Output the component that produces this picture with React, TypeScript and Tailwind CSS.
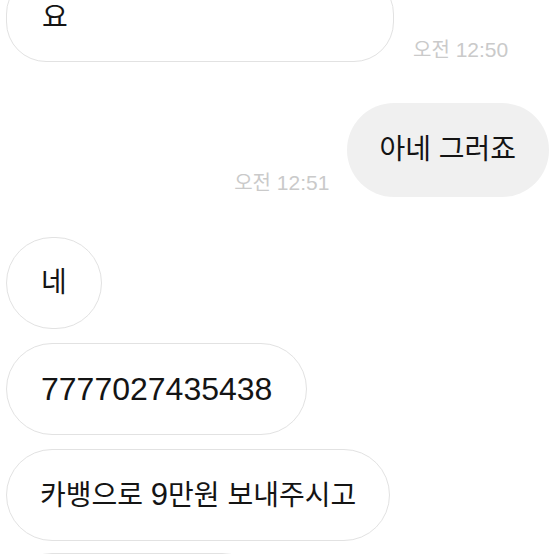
import React from "react";

const font = {
  fontFamily: '"Liberation Sans", "Noto Sans CJK KR", sans-serif',
};

export default function App() {
  return (
    <div
      className="w-[554px] h-[554px] overflow-hidden bg-white text-[#141414]"
      style={font}
    >
      {/* Row 1: received multi-line bubble (last line visible) */}
      <div className="flex items-end pl-[6px] -mt-[26px]">
        <div className="w-[388px] h-[88px] rounded-[40px] border border-[#e2e2e2] bg-white flex items-center px-[35px]">
          <span className="text-[28px] leading-[32px]">요</span>
        </div>
        <div className="ml-[19px] -mb-[2px] text-[#cacaca] leading-[24px] whitespace-nowrap">
          <span className="text-[20px]">오전</span>
          <span className="text-[21px]"> 12:50</span>
        </div>
      </div>

      {/* Row 2: sent bubble */}
      <div className="flex items-end justify-end pr-[5px] mt-[41px]">
        <div className="mr-[18px] mb-[0px] text-[#cacaca] leading-[24px] whitespace-nowrap">
          <span className="text-[20px]">오전</span>
          <span className="text-[21px]"> 12:51</span>
        </div>
        <div className="h-[94px] rounded-full bg-[#f0f0f0] flex items-center pl-[32px] pr-[33px]">
          <span className="text-[28px] leading-[32px] whitespace-nowrap">
            아네 그러죠
          </span>
        </div>
      </div>

      {/* Received group */}
      <div className="flex flex-col items-start pl-[6px] mt-[40px]">
        <div className="h-[92px] rounded-full border border-[#e2e2e2] bg-white flex items-center px-[34px]">
          <span className="text-[28px] leading-[32px]">네</span>
        </div>
        <div className="mt-[14px] h-[92px] rounded-full border border-[#e2e2e2] bg-white flex items-center px-[34px]">
          <span className="text-[32px] leading-[32px] whitespace-nowrap">
            7777027435438
          </span>
        </div>
        <div className="mt-[14px] h-[92px] rounded-full border border-[#e2e2e2] bg-white flex items-center px-[33px]">
          <span className="text-[28px] leading-[32px] whitespace-nowrap">
            카뱅으로 <span className="text-[31px]">9</span>만원 보내주시고
          </span>
        </div>
        <div className="mt-[12px] w-[262px] h-[92px] rounded-full border border-[#e2e2e2] bg-white" />
      </div>
    </div>
  );
}
